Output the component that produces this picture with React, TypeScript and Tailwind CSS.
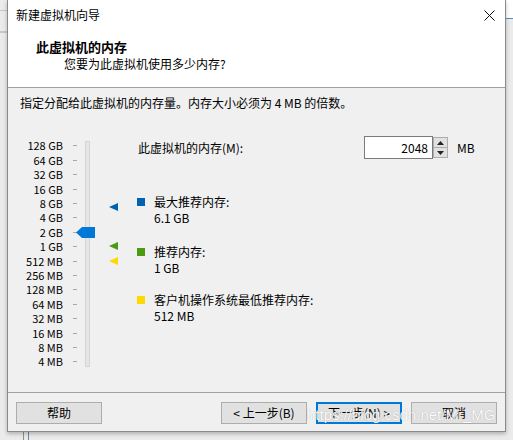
import React from "react";

const labels = [
  "128 GB", "64 GB", "32 GB", "16 GB", "8 GB", "4 GB", "2 GB", "1 GB",
  "512 MB", "256 MB", "128 MB", "64 MB", "32 MB", "16 MB", "8 MB", "4 MB",
];

function Btn({ children, focused }: { children: React.ReactNode; focused?: boolean }) {
  return (
    <div
      className={
        "w-[86px] h-[22px] flex items-center justify-center bg-[#e1e1e1] text-[12px] leading-none " +
        (focused ? "border-2 border-[#0078d7]" : "border border-[#adadad]")
      }
    >
      {children}
    </div>
  );
}

function Legend({ color, title, value, className }: { color: string; title: string; value: string; className?: string }) {
  return (
    <div className={"flex " + (className ?? "")}>
      <div className={"w-[8px] h-[8px] mt-[4px] " + color} />
      <div className="ml-[9px] text-[12px] leading-[16px]">
        <div>{title}</div>
        <div>{value}</div>
      </div>
    </div>
  );
}

export default function App() {
  return (
    <div className="relative w-[513px] h-[440px] overflow-hidden bg-[#ebebeb] text-black font-['Noto_Sans_CJK_SC','Noto_Sans',sans-serif]">
      {/* desktop background bits */}
      <div className="absolute left-0 top-[10px] w-[7px] h-px bg-[#c8c8c8]" />
      <div className="absolute left-0 top-[31px] w-[7px] h-[2px] bg-[#c8c8c8]" />
      <div className="absolute right-0 top-0 w-[8px] h-[18px] bg-white" />
      <div className="absolute right-0 top-[18px] w-[8px] h-px bg-[#4a90d0]" />
      <div className="absolute left-[23px] top-[432px] w-px h-[8px] bg-[#909090]" />
      <div className="absolute left-[28px] top-[432px] w-px h-[8px] bg-[#6a8aa8]" />

      {/* dialog window */}
      <div className="relative ml-[7px] w-[499px] h-[432px] border-x border-b border-[#8a8a8a] bg-[#f0f0f0] flex flex-col shadow-[0_2px_4px_rgba(0,0,0,0.25)]">
        {/* header */}
        <div className="h-[88px] bg-white border-b border-[#a0a0a0]">
          <div className="h-[30px] flex items-center justify-between pl-[8px] pr-[10px]">
            <span className="text-[12px] leading-none">新建虚拟机向导</span>
            <svg width="11" height="11" viewBox="0 0 11 11">
              <path d="M0.5 0.5L10.5 10.5M10.5 0.5L0.5 10.5" stroke="#111" strokeWidth="1" />
            </svg>
          </div>
          <div className="mt-[8px] pl-[28px] h-[18px] text-[13px] leading-[18px] font-bold">此虚拟机的内存</div>
          <div className="pl-[56px] h-[16px] text-[12px] leading-[16px]">您要为此虚拟机使用多少内存?</div>
        </div>

        {/* body */}
        <div className="flex-1 pt-[7px] pl-[12px]">
          <div className="h-[16px] text-[12px] leading-[16px]">指定分配给此虚拟机的内存量。内存大小必须为 4 MB 的倍数。</div>

          <div className="mt-[25px] flex">
            {/* slider */}
            <div className="relative w-[117px] h-[240px] flex">
              <div className="pt-[2.8px] pl-[1px]">
                {labels.map((l) => (
                  <div key={l} className="h-[14.4px] flex items-center">
                    <span className="w-[42px] text-right text-[11px] leading-none whitespace-nowrap">{l}</span>
                    <span className="ml-[10px] w-[4px] h-px bg-[#a8a8a8]" />
                  </div>
                ))}
              </div>
              <div className="ml-[8px] mt-[5px] w-[5px] h-[226px] bg-[#e6e6e6] border border-[#d4d4d4]" />
              {/* thumb */}
              <svg className="absolute left-[56px] top-[91px]" width="19" height="11" viewBox="0 0 19 11">
                <polygon points="0,5.5 6,0 19,0 19,11 6,11" fill="#0078d7" />
              </svg>
              {/* markers */}
              <svg className="absolute left-[89px] top-[67px]" width="9" height="8" viewBox="0 0 9 8">
                <polygon points="0,4 9,0 9,8" fill="#0063b1" />
              </svg>
              <svg className="absolute left-[89px] top-[106px]" width="9" height="8" viewBox="0 0 9 8">
                <polygon points="0,4 9,0 9,8" fill="#4b9a0f" />
              </svg>
              <svg className="absolute left-[89px] top-[121px]" width="9" height="8" viewBox="0 0 9 8">
                <polygon points="0,4 9,0 9,8" fill="#ffd800" />
              </svg>
            </div>

            {/* right side */}
            <div className="flex flex-col">
              <div className="flex items-center h-[23px]">
                <span className="w-[227px] text-[12px] leading-none pl-[1px]">此虚拟机的内存(M):</span>
                <div className="w-[69px] h-[23px] border border-[#7a7a7a] bg-white flex items-center justify-end pr-[4px] text-[12px] leading-none">
                  2048
                </div>
                <div className="w-[15px] h-[21px] flex flex-col border border-[#adadad] bg-[#e1e1e1]">
                  <div className="flex-1 flex items-center justify-center border-b border-[#adadad]">
                    <svg width="7" height="4" viewBox="0 0 7 4"><polygon points="3.5,0 7,4 0,4" fill="#222" /></svg>
                  </div>
                  <div className="flex-1 flex items-center justify-center">
                    <svg width="7" height="4" viewBox="0 0 7 4"><polygon points="0,0 7,0 3.5,4" fill="#222" /></svg>
                  </div>
                </div>
                <span className="ml-[9px] text-[12px] leading-none">MB</span>
              </div>

              <Legend className="mt-[35px]" color="bg-[#0063b1]" title="最大推荐内存:" value="6.1 GB" />
              <Legend className="mt-[18px]" color="bg-[#4b9a0f]" title="推荐内存:" value="1 GB" />
              <Legend className="mt-[16px]" color="bg-[#ffd800]" title="客户机操作系统最低推荐内存:" value="512 MB" />
            </div>
          </div>
        </div>

        {/* footer */}
        <div className="border-t border-[#a0a0a0] pt-[9px] pb-[7px] px-[8px] flex items-center">
          <Btn>帮助</Btn>
          <div className="flex-1" />
          <div className="flex gap-[9px]">
            <Btn>&lt; 上一步(B)</Btn>
            <Btn focused>下一步(N) &gt;</Btn>
            <Btn>取消</Btn>
          </div>
        </div>
      </div>

      {/* watermark */}
      <div className="absolute left-[307px] top-[406px] text-[15px] leading-[18px] text-white font-['Liberation_Sans',sans-serif] [text-shadow:0_0_1px_rgba(0,0,0,0.35)] opacity-90">
        https://blog.csdn.net/Mr_MG
      </div>
    </div>
  );
}
